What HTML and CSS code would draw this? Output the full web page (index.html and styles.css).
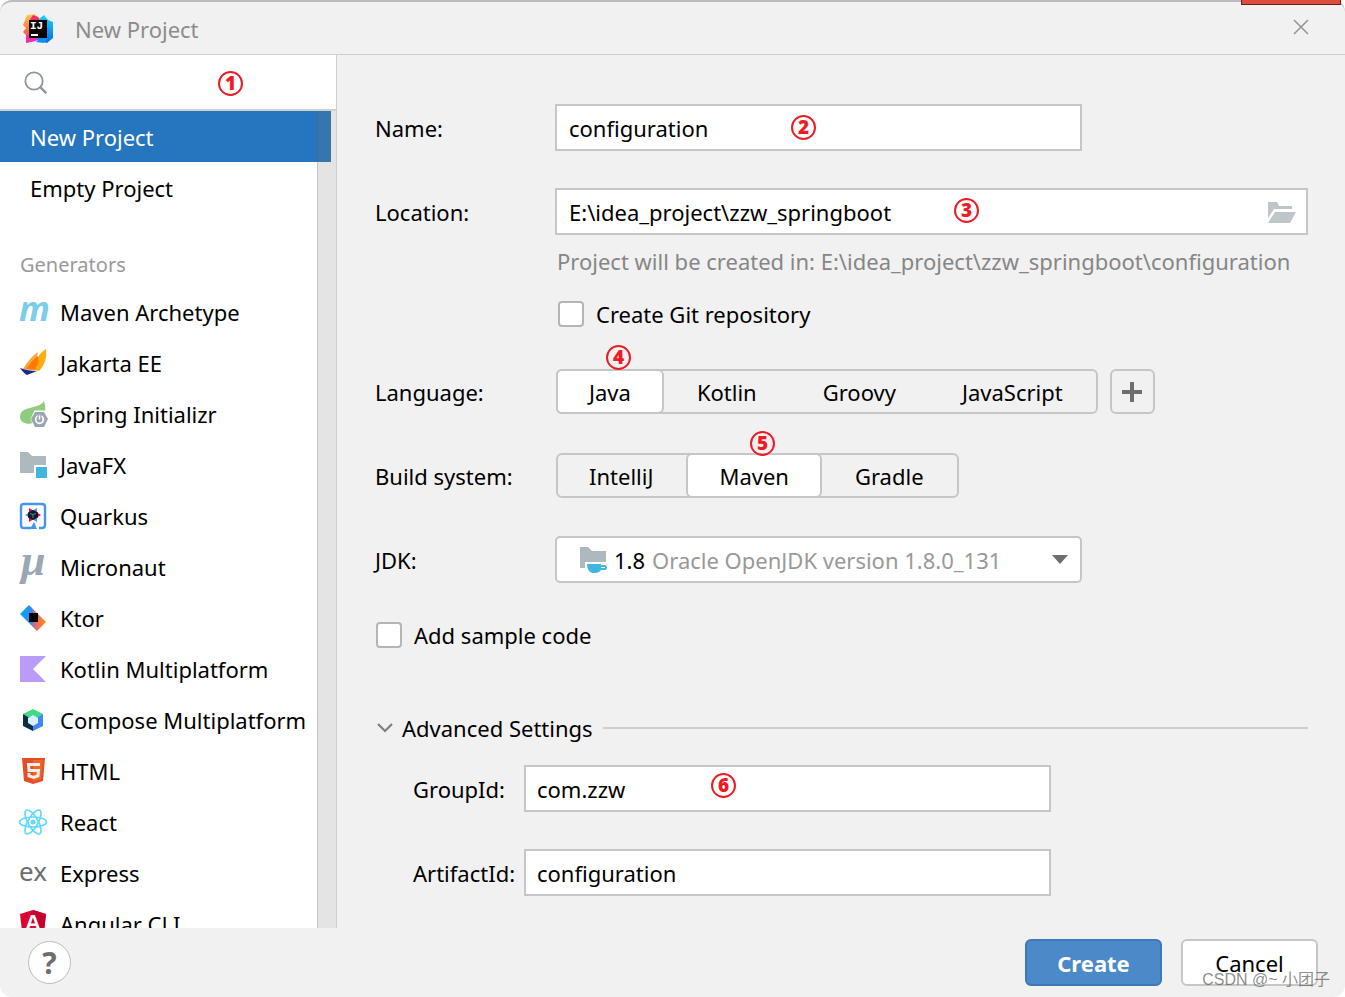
FILE: index.html
```html
<!DOCTYPE html>
<html lang="en">
<head>
<meta charset="utf-8">
<title>New Project</title>
<link rel="stylesheet" href="styles.css">
</head>
<body>
<div class="window">
  <span class="tab-edge"></span>
  <header class="titlebar">
    <svg class="logo" viewBox="0 0 30 30" aria-hidden="true">
      <defs>
        <linearGradient id="lw" x1="0" y1="0" x2="0" y2="1"><stop offset="0" stop-color="#fbd05a"/><stop offset=".5" stop-color="#fd7a35"/><stop offset="1" stop-color="#f3269b"/></linearGradient>
        <linearGradient id="lb" x1="0" y1="0" x2="0" y2="1"><stop offset="0" stop-color="#16d5f0"/><stop offset="1" stop-color="#0a6cf0"/></linearGradient>
      </defs>
      <path d="M4 1 12 0 17 6 14 22 3 29 3 21 0 18 3 14 0 11Z" fill="url(#lw)"/>
      <path d="M10 1 15 3 19 8 10 12 6 7Z" fill="#fb2b62"/>
      <path d="M16 5 21 1 25 6 30 8 30 24 24 29 14 26Z" fill="url(#lb)"/>
      <path d="M3 29 13 27 17 22 8 20 3 22Z" fill="#f02dad"/>
      <path d="M13 28 18 23 25 24 21 29Z" fill="#0b91f5"/>
      <path d="M6 6h18v18H6z" fill="#0b0306"/>
      <text x="7" y="15" class="logo-ij">IJ</text>
      <path d="M8 20h7v2H8z" fill="#fff"/>
    </svg>
    <h1 class="title">New Project</h1>
    <button class="close" type="button" aria-label="Close">
      <svg viewBox="0 0 16 16"><path d="M1 1 15 15M15 1 1 15" fill="none" stroke="#949494" stroke-width="1.5"/></svg>
    </button>
  </header>

  <div class="content">
    <aside class="sidebar">
      <div class="search">
        <svg class="search-icon" viewBox="0 0 24 24" aria-hidden="true"><circle cx="10" cy="10" r="8.7" fill="none" stroke="#8c979e" stroke-width="1.8"/><path d="m16.2 16.2 6 6" stroke="#8c979e" stroke-width="2.4"/></svg>
        <input class="search-input" type="text" aria-label="Search">
        <span class="mark mark-1">1</span>
      </div>
      <nav class="list">
        <a class="item plain selected" href="#">New Project</a>
        <a class="item plain" href="#">Empty Project</a>
        <h2 class="group-title">Generators</h2>
        <a class="item" href="#"><svg class="icon" viewBox="0 0 28 28"><text x="0" y="23" class="g-maven">m</text></svg>Maven Archetype</a>
        <a class="item" href="#"><svg class="icon" viewBox="0 0 28 28"><path d="M27 0C20 4 16 12 14 21l6 1c6-6 8-14 7-22Z" fill="#ffac14"/><path d="M19 3C13 7 8 13 4 20l10 1c2-7 4-12 5-18Z" fill="#f7a94a"/><path d="M19 7c-5 3-8 8-12 13l8 1c4-4 5-9 4-14Z" fill="#ff7a00"/><path d="M1 19c6 2 11 3 17 3l-10 4c-2-1-5-4-7-7Z" fill="#1b2a91"/></svg>Jakarta EE</a>
        <a class="item" href="#"><svg class="icon" viewBox="0 0 28 28"><path d="M25 1c2 6 2 12-2 14-7-2-10 3-9 8-5 2-13 0-13-6C1 5 20 10 25 1Z" fill="#90cc7f"/><path d="m15.500 10.500h10l4 8.500-4 8.500h-10l-4-8.500Z" fill="#fff"/><path d="M16 12h9l4 7-4 8h-9l-4-8Z" fill="#9aa7b0"/><circle cx="20.500" cy="19.500" r="3.800" fill="none" stroke="#fff" stroke-width="1.800"/><path d="M20.500 15v4" stroke="#9aa7b0" stroke-width="4"/><path d="M20.500 15.500v4" stroke="#fff" stroke-width="1.600"/></svg>Spring Initializr</a>
        <a class="item" href="#"><svg class="icon" viewBox="0 0 28 28"><path d="M1 1h8l4 4h14v9H15v8H1Z" fill="#adb8bf"/><path d="M17 16h11v11H17z" fill="#40b6e0"/></svg>JavaFX</a>
        <a class="item" href="#"><svg class="icon" viewBox="0 0 28 28"><path d="M12 26H5q-3 0-3-3V5q0-3 3-3h18q3 0 3 3v18q0 3-3 3h-3" fill="none" stroke="#4695eb" stroke-width="2.400"/><path d="m11 27 4-7 3 7Z" fill="#4695eb"/><path d="m6 13 12-7v14Z" fill="#4695eb"/><path d="M22 13 10 6v14Z" fill="#ff004a"/><path d="m14 8 5 2.500v5l-5 2.500-5-2.500v-5Z" fill="#0d1c2c"/><path d="m11 11.500 3 1 3-1M14 12.500v3.500" fill="none" stroke="#69808c"/></svg>Quarkus</a>
        <a class="item" href="#"><svg class="icon" viewBox="0 0 28 28"><text x="2" y="22" class="g-mu">μ</text></svg>Micronaut</a>
        <a class="item" href="#"><svg class="icon" viewBox="0 0 28 28"><defs><linearGradient id="kt"><stop offset="0" stop-color="#00a8ff"/><stop offset=".4" stop-color="#298df4"/><stop offset=".6" stop-color="#e46876"/><stop offset="1" stop-color="#ff9000"/></linearGradient></defs><path d="m1 10 9-9 17 17-9 9Z" fill="url(#kt)"/><path d="M10 9h9v9h-9z"/></svg>Ktor</a>
        <a class="item" href="#"><svg class="icon" viewBox="0 0 28 28"><path d="M1 1h26L14 14l13 13H1Z" fill="#b99bf8"/></svg>Kotlin Multiplatform</a>
        <a class="item" href="#"><svg class="icon" viewBox="0 0 28 28"><path d="M4 8 14 3l10 5-10 7Z" fill="#3ddc84"/><path d="M4 8v12l10 5V14Z" fill="#083042"/><path d="M24 8v12l-10 5V14Z" fill="#4285f4"/><path d="m14 9 5 3v5l-5 3-5-3v-5Z" fill="#d7effe"/></svg>Compose Multiplatform</a>
        <a class="item" href="#"><svg class="icon" viewBox="0 0 28 28"><path d="M3 1h23l-2 23-10 3-9-3Z" fill="#e44d26"/><path d="M14 3h10l-2 19-8 3Z" fill="#f16529"/><path d="M21 7.500H9.500l.5 6h9.500l-.5 5.500-4.500 1.500-4.500-1.500V16" fill="none" stroke="#f2eeec" stroke-width="3"/></svg>HTML</a>
        <a class="item" href="#"><svg class="icon" viewBox="0 0 28 28"><g fill="none" stroke="#61dafb" stroke-width="1.700"><ellipse cx="14" cy="14" rx="13.500" ry="5"/><ellipse cx="14" cy="14" rx="13.500" ry="5" transform="rotate(60 14 14)"/><ellipse cx="14" cy="14" rx="13.500" ry="5" transform="rotate(120 14 14)"/></g><circle cx="14" cy="14" r="2.500" fill="#61dafb"/></svg>React</a>
        <a class="item" href="#"><svg class="icon" viewBox="0 0 28 28"><text x="0" y="22" class="g-ex">ex</text></svg>Express</a>
        <a class="item" href="#"><svg class="icon" viewBox="0 0 28 28"><path d="m14 0 13 4-2 17-11 6L3 21 1 4Z" fill="#dd0031"/><path d="m14 0 13 4-2 17-11 6Z" fill="#c3002f"/><text x="14" y="20" class="g-ng">A</text></svg>Angular CLI</a>
        <span class="scrollbar"></span>
      </nav>
    </aside>

    <main class="form">
      <div class="row">
        <label class="label" for="name">Name:</label>
        <div class="field"><input class="input" id="name" type="text" value="configuration"><span class="mark mark-2">2</span></div>
      </div>
      <div class="row">
        <label class="label" for="location">Location:</label>
        <div class="field wide">
          <input class="input" id="location" type="text" value="E:\idea_project\zzw_springboot">
          <button class="browse" type="button" aria-label="Browse"><svg viewBox="0 0 28 22"><path d="M0 0h9l2 4h13v3H6L0 16Z" fill="#bfc5c9"/><path d="M7 10h21l-6 11H0Z" fill="#bfc5c9"/></svg></button>
          <span class="mark mark-3">3</span>
        </div>
      </div>
      <div class="below">
        <p class="hint">Project will be created in: E:\idea_project\zzw_springboot\configuration</p>
        <label class="check"><input type="checkbox" class="box">Create Git repository</label>
      </div>
      <div class="row" role="radiogroup" aria-label="Language">
        <span class="label">Language:</span>
        <div class="segments">
          <label class="segment"><input type="radio" name="language" checked>Java</label>
          <label class="segment"><input type="radio" name="language">Kotlin</label>
          <label class="segment"><input type="radio" name="language">Groovy</label>
          <label class="segment"><input type="radio" name="language">JavaScript</label>
          <span class="mark mark-4">4</span>
        </div>
        <button class="add" type="button" aria-label="Add language"><svg viewBox="0 0 20 20"><path d="M10 0v20M0 10h20" stroke="#6e6e6e" stroke-width="4"/></svg></button>
      </div>
      <div class="row" role="radiogroup" aria-label="Build system">
        <span class="label">Build system:</span>
        <div class="segments">
          <label class="segment"><input type="radio" name="build">IntelliJ</label>
          <label class="segment"><input type="radio" name="build" checked>Maven</label>
          <label class="segment"><input type="radio" name="build">Gradle</label>
          <span class="mark mark-5">5</span>
        </div>
      </div>
      <div class="row">
        <label class="label" for="jdk">JDK:</label>
        <div class="field combo">
          <svg class="icon" viewBox="0 0 28 28" aria-hidden="true"><path d="M1 1h8l4 4h14v11H6v6H1Z" fill="#adb8bf"/><path d="M8 18h14v1h4q2 0 2 2.500T26 24h-4q-2 3-5 3h-4q-5-2-5-9Z" fill="#40b6e0"/><path d="M22 21h4v1h-4z" fill="#fff"/></svg>
          <span>1.8</span>
          <select class="select" id="jdk"><option>Oracle OpenJDK version 1.8.0_131</option></select>
          <svg class="arrow" viewBox="0 0 16 9" aria-hidden="true"><path d="M0 0h16L8 9Z" fill="#6e6e6e"/></svg>
        </div>
      </div>
      <label class="check sample"><input type="checkbox" class="box">Add sample code</label>
      <section class="advanced">
        <h2 class="advanced-head">
          <button class="toggle" type="button" aria-expanded="true"><svg class="chevron" viewBox="0 0 16 10"><path d="m1 1 7 7 7-7" fill="none" stroke="#7f7f7f" stroke-width="2.200"/></svg>Advanced Settings</button>
        </h2>
        <div class="row">
          <label class="label" for="group">GroupId:</label>
          <div class="field"><input class="input" id="group" type="text" value="com.zzw"><span class="mark mark-6">6</span></div>
        </div>
        <div class="row">
          <label class="label" for="artifact">ArtifactId:</label>
          <div class="field"><input class="input" id="artifact" type="text" value="configuration"></div>
        </div>
      </section>
    </main>
  </div>

  <footer class="footer">
    <button class="help" type="button" aria-label="Help">?</button>
    <button class="button primary" type="button">Create</button>
    <button class="button" type="button">Cancel</button>
    <span class="watermark">CSDN @~ 小团子</span>
  </footer>
</div>
</body>
</html>
```

FILE: styles.css
```css
:root {
  --line: #c6c6c6;
  --bg: #f1f1f1;
  --field: 527px;
  --red: #ed1c24;
}

* { box-sizing: border-box; }

body {
  margin: 0;
  background: #fff;
  color: #000;
  font-family: "Noto Sans", "Open Sans", "Noto Sans CJK SC", sans-serif;
  font-size: 22px;
  line-height: 30px;
}

button, input, select { font: inherit; color: inherit; }
button { padding: 0; cursor: pointer; }
h1, h2, p { margin: 0; font-size: inherit; font-weight: 400; }
svg { display: block; }

.window {
  position: relative;
  display: flex;
  flex-direction: column;
  height: 100vh;
  background: var(--bg);
  border-top: 2px solid #bcbcbc;
  border-radius: 12px;
}

.tab-edge {
  position: absolute;
  top: -2px;
  right: 4px;
  width: 100px;
  height: 5px;
  background: #dc4d3d;
  border: 1px solid #6b1d16;
  border-top: 0;
}

.titlebar {
  display: flex;
  align-items: center;
  flex: none;
  height: 53px;
  padding: 0 36px 2px 23px;
  border-bottom: 1px solid #cfcfcf;
}
.logo { width: 30px; height: 30px; margin-top: 3px; }
.logo-ij { font: bold 11px "Liberation Mono", monospace; fill: #fff; }
.title { margin-left: 22px; padding-top: 4px; color: #8c8c8c; }
.close { margin-left: auto; border: 0; background: none; }
.close svg { width: 16px; height: 16px; }

.content { display: flex; flex: 1; min-height: 0; }

.sidebar {
  display: flex;
  flex-direction: column;
  flex: none;
  width: 337px;
  background: #fff;
  border-right: 1px solid #cfcfcf;
}
.search {
  position: relative;
  display: flex;
  align-items: center;
  flex: none;
  height: 56px;
  padding: 2px 0 0 24px;
  border-bottom: 2px solid #d1d1d1;
}
.search-icon { width: 24px; height: 24px; }
.search-input { flex: 1; min-width: 0; border: 0; outline: 0; background: none; }

.list { position: relative; flex: 1; min-height: 0; overflow: hidden; }
.item {
  display: flex;
  align-items: center;
  gap: 13px;
  height: 51px;
  padding: 1px 0 0 19px;
  color: inherit;
  text-decoration: none;
  white-space: nowrap;
}
.plain { padding-left: 30px; }
.selected { margin-right: 5px; background: #2675bf; color: #fff; }
.group-title {
  height: 73px;
  padding: 37px 0 0 20px;
  color: #999;
  font-size: 20px;
}
.icon { flex: none; width: 28px; height: 28px; overflow: visible; }
.g-maven { font: italic bold 34px "Open Sans", "Noto Sans", sans-serif; fill: #7bcdec; }
.g-mu { font: italic bold 44px "Liberation Serif", serif; fill: #9aa7b0; }
.g-ex { font: 26px "Noto Sans", sans-serif; fill: #6e6e6e; }
.g-ng { font: bold 22px "Liberation Sans", sans-serif; fill: #fff; text-anchor: middle; }
.scrollbar {
  position: absolute;
  top: 0;
  right: 0;
  bottom: 0;
  width: 19px;
  background: rgba(120, 120, 120, 0.2);
  border-left: 1px solid rgba(80, 80, 80, 0.2);
}

.form {
  display: flex;
  flex-direction: column;
  flex: 1;
  min-width: 0;
  padding: 49px 37px 0 38px;
}
.row { display: flex; align-items: center; min-height: 47px; }
.row + .row { margin-top: 37px; }
.label { flex: none; width: 180px; }
.field { position: relative; flex: 0 1 var(--field); min-width: 0; }
.wide { flex: 1; }
.input {
  display: block;
  width: 100%;
  height: 47px;
  padding: 0 12px;
  background: #fff;
  border: 2px solid var(--line);
}
.browse {
  position: absolute;
  top: 14px;
  right: 12px;
  background: none;
  border: 0;
}
.browse svg { width: 28px; height: 22px; }

.below { margin: 11px 0 39px 182px; }
.hint { color: #868686; white-space: nowrap; }
.check { display: flex; align-items: center; gap: 12px; padding-left: 1px; }
.below .check { margin-top: 23px; }
.box {
  appearance: none;
  width: 26px;
  height: 26px;
  margin: 0;
  background: #fff;
  border: 2px solid #b5b5b5;
  border-radius: 4px;
}

.segments {
  position: relative;
  display: flex;
  height: 45px;
  margin-left: 1px;
  border: 2px solid var(--line);
  border-radius: 6px;
}
.segment {
  display: flex;
  align-items: center;
  margin: -2px 0;
  padding: 0 31px;
  border: 2px solid transparent;
  border-radius: 6px;
}
.segment:first-child { margin-left: -2px; }
.segment:has(:checked) {
  background: #fff;
  border-color: var(--line);
}
.segment input { appearance: none; width: 0; height: 0; margin: 0; }
.add {
  display: grid;
  place-items: center;
  width: 45px;
  height: 45px;
  margin-left: 12px;
  background: none;
  border: 2px solid var(--line);
  border-radius: 6px;
}
.add svg { width: 20px; height: 20px; }

.combo {
  display: flex;
  align-items: center;
  height: 47px;
  padding: 0 12px 0 22px;
  background: #fff;
  border: 2px solid var(--line);
  border-radius: 5px;
}
.combo span { margin: 0 7px; }
.select {
  appearance: none;
  flex: 1;
  min-width: 0;
  padding: 0;
  border: 0;
  background: none;
  color: #999;
}
.arrow { width: 16px; height: 9px; }

.sample { margin-top: 37px; }
.advanced { margin-top: 63px; }
.advanced-head { display: flex; align-items: center; gap: 10px; margin-bottom: 22px; }
.advanced-head::after { content: ""; flex: 1; height: 2px; background: #cecece; }
.toggle { display: flex; align-items: center; gap: 9px; padding-left: 2px; border: 0; background: none; }
.chevron { width: 16px; height: 10px; }
.advanced .row { padding-left: 38px; }
.advanced .label { width: 111px; }
.advanced .input { padding: 0 11px; }

.footer {
  position: relative;
  display: flex;
  align-items: center;
  flex: none;
  gap: 19px;
  height: 69px;
  padding: 0 27px 0 28px;
}
.help {
  width: 43px;
  height: 43px;
  margin-right: auto;
  background: #fff;
  border: 1px solid #bdbdbd;
  border-radius: 50%;
  color: #6e6e6e;
  font-size: 30px;
  font-weight: 700;
}
.button {
  width: 137px;
  height: 47px;
  background: #fff;
  border: 2px solid var(--line);
  border-radius: 6px;
}
.primary {
  background: #4c89c9;
  border-color: #3f78b8;
  color: #fff;
  font-weight: 700;
}
.watermark {
  position: absolute;
  right: 15px;
  bottom: 2px;
  color: rgba(90, 90, 90, 0.7);
  font-family: "Liberation Sans", "Noto Sans CJK SC", sans-serif;
  font-size: 16px;
}

/* Numbered callouts over the controls */
.mark {
  position: absolute;
  display: grid;
  place-items: center;
  width: 25px;
  height: 25px;
  border: 2px solid var(--red);
  border-radius: 50%;
  color: var(--red);
  font-size: 19px;
  font-weight: 900;
  line-height: 19px;
}
.mark-1 { left: 218px; top: 16px; }
.mark-2 { left: 236px; top: 11px; }
.mark-3 { left: 399px; top: 10px; }
.mark-4 { left: 48px; top: -26px; }
.mark-5 { left: 192px; top: -24px; }
.mark-6 { left: 187px; top: 8px; }
```
